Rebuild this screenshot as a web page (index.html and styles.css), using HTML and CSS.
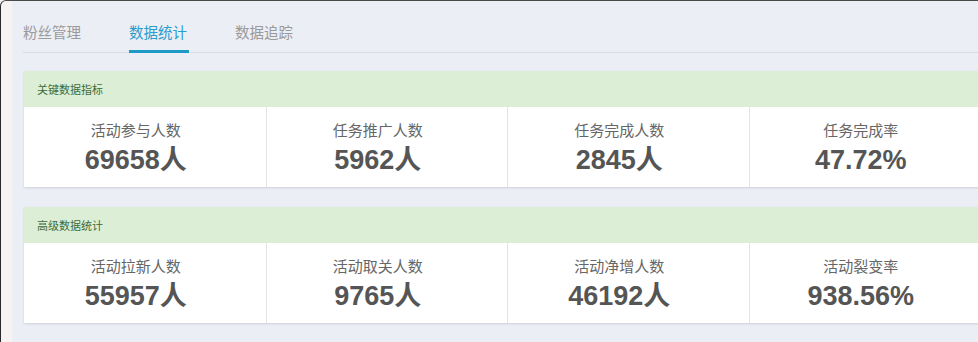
FILE: index.html
```html
<!DOCTYPE html>
<html lang="zh-CN">
<head>
    <meta charset="UTF-8">
    <meta name="viewport" content="width=device-width, initial-scale=1.0">
    <title>数据统计</title>
    <link rel="stylesheet" href="styles.css">
</head>
<body>

<div class="frame">
    <div class="page">
        <div class="tabs">
            <a class="tab">粉丝管理</a>
            <a class="tab active">数据统计</a>
            <a class="tab">数据追踪</a>
        </div>

        <div class="panel">
            <div class="panel-heading">关键数据指标</div>
            <div class="panel-body">
                <div class="stat">
                    <div class="stat-label">活动参与人数</div>
                    <div class="stat-value">69658人</div>
                </div>
                <div class="stat">
                    <div class="stat-label">任务推广人数</div>
                    <div class="stat-value">5962人</div>
                </div>
                <div class="stat">
                    <div class="stat-label">任务完成人数</div>
                    <div class="stat-value">2845人</div>
                </div>
                <div class="stat">
                    <div class="stat-label">任务完成率</div>
                    <div class="stat-value">47.72%</div>
                </div>
            </div>
        </div>

        <div class="panel">
            <div class="panel-heading">高级数据统计</div>
            <div class="panel-body">
                <div class="stat">
                    <div class="stat-label">活动拉新人数</div>
                    <div class="stat-value">55957人</div>
                </div>
                <div class="stat">
                    <div class="stat-label">活动取关人数</div>
                    <div class="stat-value">9765人</div>
                </div>
                <div class="stat">
                    <div class="stat-label">活动净增人数</div>
                    <div class="stat-value">46192人</div>
                </div>
                <div class="stat">
                    <div class="stat-label">活动裂变率</div>
                    <div class="stat-value">938.56%</div>
                </div>
            </div>
        </div>
    </div>
</div>

</body>
</html>
```

FILE: styles.css
```css
html, body {
    margin: 0;
    height: 100%;
    background: #f7f3f3;
    overflow: hidden;
}
body {
    font-family: "Noto Sans CJK SC", "Liberation Sans", sans-serif;
}
.frame {
    height: 100%;
    box-sizing: border-box;
    border-top: 1px solid #4a4a4a;
    border-left: 1px solid #2a2a2a;
    border-top-left-radius: 6px;
    padding-left: 11px;
    background: #f7f3f3;
}
.page {
    height: 100%;
    background: #eceef6;
    overflow: hidden;
}
.tabs {
    display: flex;
    margin-left: 11px;
    padding-top: 21px;
    border-bottom: 1px solid #dadce3;
    width: 2000px;
}
.tab {
    font-size: 14.5px;
    line-height: 20px;
    color: #9a9a9a;
    padding-bottom: 8px;
    border-bottom: 3px solid transparent;
    margin-right: 48px;
    margin-bottom: -1px;
}
.tab.active {
    color: #2a9dcc;
    border-bottom-color: #1e9ac6;
    padding-right: 2px;
    margin-right: 46px;
}
.panel {
    width: 966px;
    margin: 18px 0 0 12px;
    background: #fff;
    box-shadow: 0 1px 2px rgba(0,0,0,0.12);
}
.panel + .panel {
    margin-top: 20px;
}
.panel-heading {
    height: 36px;
    line-height: 37px;
    padding-left: 13px;
    background: #dcefd6;
    color: #3c6b3a;
    font-size: 11px;
}
.panel-body {
    display: grid;
    grid-template-columns: repeat(4, 1fr);
}
.stat {
    text-align: center;
    padding: 13px 18px 12px 0;
    border-left: 1px solid #e4e4e4;
}
.stat:first-child {
    border-left: none;
}
.stat-label {
    font-size: 15px;
    line-height: 20px;
    color: #666;
}
.stat-value {
    margin-top: 5px;
    font-family: "Liberation Sans", "Noto Sans CJK SC", sans-serif;
    font-size: 27px;
    line-height: 30px;
    font-weight: bold;
    color: #555;
}
```
